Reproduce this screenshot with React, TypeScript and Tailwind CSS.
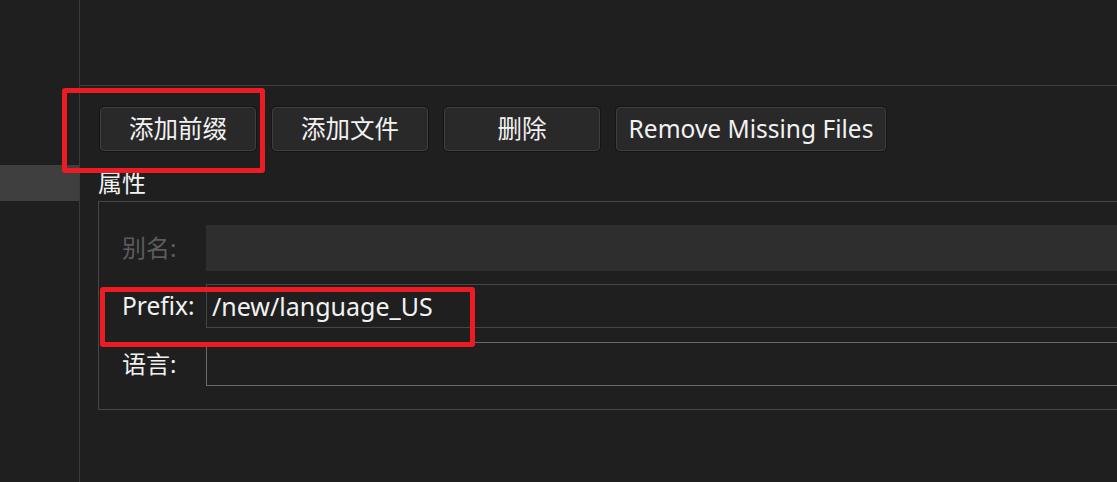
import React from "react";

const font = { fontFamily: '"Noto Sans", "Noto Sans CJK SC", sans-serif' };

function Btn({ children, w }: { children: React.ReactNode; w: string }) {
  return (
    <div
      className={`${w} h-[44px] flex items-center justify-center rounded-[4px] border border-[#3e3e3e] bg-[#292929] text-[#f2f2f2] text-[24.5px] shadow-[0_0_0_1px_#151515]`}
    >
      {children}
    </div>
  );
}

export default function App() {
  return (
    <div
      className="relative w-[1117px] h-[482px] flex bg-[#1f1f1f] overflow-hidden text-[#f2f2f2]"
      style={font}
    >
      {/* left panel */}
      <div className="w-[80px] shrink-0 border-r border-[#3a3a3a] flex flex-col">
        <div className="mt-[165px] h-[36px] w-[79px] bg-[#3f3f3f]" />
      </div>

      {/* right panel */}
      <div className="flex-1 flex flex-col min-w-0">
        <div className="h-[86px] shrink-0 border-b border-[#3c3c3c]" />
        <div className="pl-[18px] flex flex-col">
          <div className="mt-[21px] ml-[2px] flex gap-[16px]">
            <Btn w="w-[156px]">添加前缀</Btn>
            <Btn w="w-[156px]">添加文件</Btn>
            <Btn w="w-[156px]">删除</Btn>
            <Btn w="w-[270px]">Remove Missing Files</Btn>
          </div>
          <div className="mt-[17px] h-[30px] leading-[30px] text-[24px]">属性</div>
          <div className="mt-[3px] w-[1100px] h-[209px] border border-[#474747] pt-[23px] pl-[23px] flex flex-col">
            <div className="flex items-center h-[46px]">
              <div className="w-[84px] text-[24px] text-[#5c5c5c]">别名:</div>
              <div className="flex-1 h-[46px] bg-[#2e2e2e]" />
            </div>
            <div className="flex items-center h-[44px] mt-[13px]">
              <div className="w-[84px] text-[24.5px]">Prefix:</div>
              <div className="flex-1 h-[44px] border border-[#454545] flex items-center pl-[5px] text-[25px] leading-none">
                /new/language_US
              </div>
            </div>
            <div className="flex items-center h-[44px] mt-[14px]">
              <div className="w-[84px] text-[24px]">语言:</div>
              <div className="flex-1 h-[44px] border border-[#6a6a6a]" />
            </div>
          </div>
        </div>
      </div>

      {/* red annotation boxes */}
      <div className="absolute left-[62px] top-[88px] w-[203px] h-[85px] border-[5px] border-[#ec1c24] rounded-[3px]" />
      <div className="absolute left-[100px] top-[287px] w-[375px] h-[60px] border-[5px] border-[#ec1c24] rounded-[3px]" />
    </div>
  );
}
